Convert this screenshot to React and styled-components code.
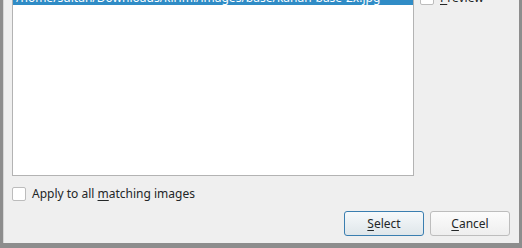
import React from 'react';
import styled, { createGlobalStyle } from 'styled-components';

const GlobalStyle = createGlobalStyle`
  html, body {
    margin: 0;
    padding: 0;
    background: #8d8d8d;
    overflow: hidden;
  }
  body {
    font-family: "Noto Sans", "Open Sans", sans-serif;
  }
`;

const Backdrop = styled.div`
  width: 522px;
  height: 248px;
  box-sizing: border-box;
  padding: 0 3px 5px 3px;
  display: flex;
  background: #8d8d8d;
`;

const Dialog = styled.div`
  flex: 1;
  display: flex;
  flex-direction: column;
  background: #efefef;
  border-left: 1px solid #d6d6d6;
  padding: 0 9px 7px 8px;
  overflow: hidden;
`;

const TopRow = styled.div`
  display: flex;
  gap: 6px;
`;

const ListBox = styled.div`
  width: 400px;
  height: 175px;
  background: #fff;
  border: 1px solid #b3b3b3;
  border-top: none;
  overflow: hidden;
`;

const ListRow = styled.div`
  height: 15px;
  margin-top: -10px;
  padding-left: 3px;
  background: ${p => (p.selected ? '#308cc6' : 'transparent')};
  color: ${p => (p.selected ? '#fff' : '#232627')};
  font-size: 12px;
  line-height: 15px;
  white-space: nowrap;
`;

const SidePanel = styled.div`
  flex: 1;
  margin-top: -11px;
`;

const CheckRow = styled.label`
  display: flex;
  align-items: center;
  gap: 6px;
  color: #232627;
  font-size: 12px;
  line-height: 17px;
`;

const Box = styled.span`
  width: 12px;
  height: 12px;
  background: #fff;
  border: 1px solid #bcbcbc;
  border-radius: 2px;
  flex: none;
`;

const Key = styled.span`
  text-decoration: underline;
  text-underline-offset: 2px;
`;

const ApplyRow = styled(CheckRow)`
  margin-top: 9px;
`;

const Footer = styled.div`
  margin-top: auto;
  display: flex;
  justify-content: flex-end;
  gap: 6px;
`;

const Button = styled.button`
  width: 80px;
  height: 25px;
  box-sizing: border-box;
  border-radius: 3px;
  font-family: "Noto Sans", "Open Sans", sans-serif;
  font-size: 12px;
  color: #232627;
  padding: 0;
  border: 1px solid ${p => (p.primary ? '#3a7eb0' : '#bdbdbd')};
  background: ${p =>
    p.primary
      ? 'linear-gradient(#f6f9fb, #dfe6ea)'
      : 'linear-gradient(#fcfcfc, #eeeeee)'};
`;

export default function App() {
  return (
    <>
      <GlobalStyle />
      <Backdrop>
        <Dialog>
          <TopRow>
            <ListBox>
              <ListRow selected>
                /home/sultan/Downloads/kirimi/images/base/kanan-base-2x.jpg
              </ListRow>
            </ListBox>
            <SidePanel>
              <CheckRow>
                <Box />
                <span><Key>P</Key>review</span>
              </CheckRow>
            </SidePanel>
          </TopRow>
          <ApplyRow>
            <Box />
            <span>Apply to all <Key>m</Key>atching images</span>
          </ApplyRow>
          <Footer>
            <Button primary><Key>S</Key>elect</Button>
            <Button><Key>C</Key>ancel</Button>
          </Footer>
        </Dialog>
      </Backdrop>
    </>
  );
}
